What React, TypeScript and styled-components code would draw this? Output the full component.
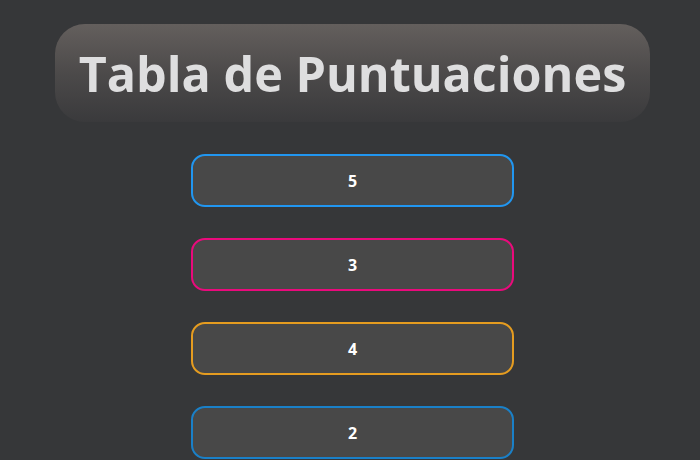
import React from "react";
import styled, { createGlobalStyle } from "styled-components";

const Global = createGlobalStyle`
  html, body { margin: 0; padding: 0; background: #363739; }
  body { font-family: "Open Sans", "Lato", sans-serif; }
`;

const Page = styled.div`
  display: flex;
  flex-direction: column;
  align-items: center;
  padding: 24px 0 0 5px;
  box-sizing: border-box;
  overflow: hidden;
  height: 460px;
`;

const TitleBox = styled.div`
  width: 595px;
  height: 98px;
  border-radius: 30px;
  background: linear-gradient(180deg, #645f5d 0%, #4c4a4a 50%, #3a3a3c 100%);
  display: flex;
  align-items: center;
  justify-content: center;
  box-sizing: border-box;
`;

const Title = styled.h1`
  margin: 0;
  font-family: "Open Sans", sans-serif;
  font-weight: 700;
  font-size: 48.5px;
  line-height: 1;
  color: #dededf;
  padding-top: 1px;
`;

const List = styled.div`
  display: flex;
  flex-direction: column;
  gap: 31px;
  margin-top: 32px;
`;

const Card = styled.div<{ $color: string }>`
  width: 323px;
  height: 53px;
  box-sizing: border-box;
  border: 2px solid ${(p) => p.$color};
  border-radius: 14px;
  background: #484848;
  display: flex;
  align-items: center;
  justify-content: center;
  color: #ffffff;
  font-weight: 700;
  font-size: 16px;
`;

const scores = [
  { value: 5, color: "#2196f0" },
  { value: 3, color: "#ea0a7c" },
  { value: 4, color: "#e59c20" },
  { value: 2, color: "#1a80c8" },
];

export default function App() {
  return (
    <>
      <Global />
      <Page>
        <TitleBox>
          <Title>Tabla de Puntuaciones</Title>
        </TitleBox>
        <List>
          {scores.map((s, i) => (
            <Card key={i} $color={s.color}>
              {s.value}
            </Card>
          ))}
        </List>
      </Page>
    </>
  );
}
